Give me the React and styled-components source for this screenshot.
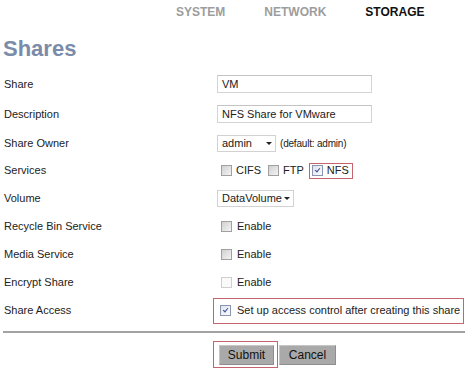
import React from 'react';
import styled, { createGlobalStyle, css } from 'styled-components';

const GlobalStyle = createGlobalStyle`
    html, body {
        margin: 0;
        padding: 0;
        background: #fff;
    }
    body {
        font-family: "Liberation Sans", Arial, sans-serif;
        color: #1e1e1e;
    }
`

const Page = styled.div`
    width: 466px;
    height: 373px;
    overflow: hidden;
`

const Tabs = styled.nav`
    display: flex;
    gap: 39px;
    padding: 5px 0 0 176px;
    height: 14px;
`

const Tab = styled.span`
    font-size: 12px;
    line-height: 14px;
    font-weight: bold;
    color: ${p => p.$active ? '#111' : '#9d9d9d'};
`

const Heading = styled.h1`
    margin: 19px 0 0 3px;
    font-size: 22px;
    line-height: 22px;
    font-weight: bold;
    color: #7a8ca9;
`

const Form = styled.div`
    margin-top: 9px;
    padding-left: 4px;
`

const Row = styled.div`
    display: grid;
    grid-template-columns: 213px 1fr;
    align-items: center;
    height: ${p => p.$h}px;
`

const Label = styled.div`
    font-size: 11px;
    line-height: 13px;
    color: #222;
`

const Control = styled.div`
    display: flex;
    align-items: center;
    font-size: 11px;
    line-height: 13px;
    padding-left: ${p => p.$inset ? 4 : 0}px;
`

const TextInput = styled.div`
    box-sizing: border-box;
    width: 155px;
    height: 18px;
    border: 1px solid #d4d4d4;
    border-top-color: #c4c4c4;
    padding-left: 4px;
    display: flex;
    align-items: center;
    font-size: 11px;
    color: #1a1a1a;
`

const Select = styled.div`
    box-sizing: border-box;
    width: ${p => p.$w}px;
    height: 17px;
    border: 1px solid #d2d2d2;
    padding: 0 3px 0 4px;
    display: flex;
    align-items: center;
    font-size: 11px;
    color: #1a1a1a;

    &::after {
        content: '';
        margin-left: auto;
        border-left: 3px solid transparent;
        border-right: 3px solid transparent;
        border-top: 3px solid #222;
    }
`

const Hint = styled.span`
    margin-left: 4px;
    font-size: 10px;
    letter-spacing: -0.2px;
    color: #222;
`

const Box = styled.span`
    box-sizing: border-box;
    width: 11px;
    height: 11px;
    flex-shrink: 0;
    border: 1px solid #a0a0a0;
    background: linear-gradient(135deg, #d0d0d0, #f4f4f4);
    position: relative;

    ${p => p.$disabled && css`
        border-color: #cfcfcf;
        background: #fafafa;
    `}

    ${p => p.$checked && css`
        border-color: #8a96b0;
        background: linear-gradient(135deg, #dde3ee, #fbfbfd);
        &::after {
            content: '';
            position: absolute;
            left: 3px;
            top: 1px;
            width: 2px;
            height: 4px;
            border: solid #3b4f96;
            border-width: 0 1.5px 1.5px 0;
            transform: rotate(40deg);
        }
    `}
`

const Option = styled.label`
    display: flex;
    align-items: center;
    gap: 4px;
    margin-right: ${p => p.$gap || 0}px;
    color: #222;
`

const Highlight = styled.div`
    display: flex;
    align-items: center;
    border: 1px solid #c4646c;
    box-sizing: border-box;
    height: ${p => p.$h}px;
    margin-left: ${p => p.$ml || 0}px;
    padding: 0 ${p => p.$pr}px 0 ${p => p.$pl}px;
    width: ${p => p.$w ? `${p.$w}px` : 'auto'};
`

const Divider = styled.hr`
    margin: 7px 1px 0 3px;
    border: 0;
    height: 2px;
    background: #a2a2a2;
`

const Actions = styled.div`
    display: flex;
    align-items: center;
    padding-left: 213px;
    margin-top: 8px;
`

const Button = styled.button`
    box-sizing: border-box;
    width: ${p => p.$w}px;
    height: 20px;
    margin: 0 0 0 ${p => p.$ml || 0}px;
    padding: 0;
    background: #a9a9a9;
    border: 1px solid #8e8e8e;
    border-top-color: #c6c6c6;
    border-left-color: #c6c6c6;
    font-family: "Liberation Sans", Arial, sans-serif;
    font-size: 12px;
    color: #111;
`

const EnableRow = ({ label, h, disabled }) => <Row $h={h}>
    <Label>{label}</Label>
    <Control $inset>
        <Option><Box $disabled={disabled} /> <span style={{ marginLeft: 1 }}>Enable</span></Option>
    </Control>
</Row>

export default function App() {
    return <Page>
        <GlobalStyle />
        <Tabs>
            <Tab>SYSTEM</Tab>
            <Tab>NETWORK</Tab>
            <Tab $active>STORAGE</Tab>
        </Tabs>
        <Heading>Shares</Heading>
        <Form>
            <Row $h={30}>
                <Label>Share</Label>
                <Control><TextInput>VM</TextInput></Control>
            </Row>
            <Row $h={30}>
                <Label>Description</Label>
                <Control><TextInput>NFS Share for VMware</TextInput></Control>
            </Row>
            <Row $h={28}>
                <Label>Share Owner</Label>
                <Control>
                    <Select $w={59}>admin</Select>
                    <Hint>(default: admin)</Hint>
                </Control>
            </Row>
            <Row $h={27}>
                <Label>Services</Label>
                <Control $inset>
                    <Option $gap={7}><Box />CIFS</Option>
                    <Option $gap={5}><Box />FTP</Option>
                    <Highlight $h={16} $pl={2} $pr={3}>
                        <Option><Box $checked />NFS</Option>
                    </Highlight>
                </Control>
            </Row>
            <Row $h={28}>
                <Label>Volume</Label>
                <Control><Select $w={77}>DataVolume</Select></Control>
            </Row>
            <EnableRow label="Recycle Bin Service" h={28} />
            <EnableRow label="Media Service" h={28} />
            <EnableRow label="Encrypt Share" h={29} disabled />
            <Row $h={27}>
                <Label>Share Access</Label>
                <Control>
                    <Highlight $h={26} $ml={-4} $pl={6} $pr={2} $w={251}>
                        <Option $gap={0}><Box $checked /><span style={{ marginLeft: 2 }}>Set up access control after creating this share</span></Option>
                    </Highlight>
                </Control>
            </Row>
        </Form>
        <Divider />
        <Actions>
            <Highlight $h={27} $pl={5} $pr={3}>
                <Button $w={55}>Submit</Button>
            </Highlight>
            <Button $w={57} $ml={1}>Cancel</Button>
        </Actions>
    </Page>
}
